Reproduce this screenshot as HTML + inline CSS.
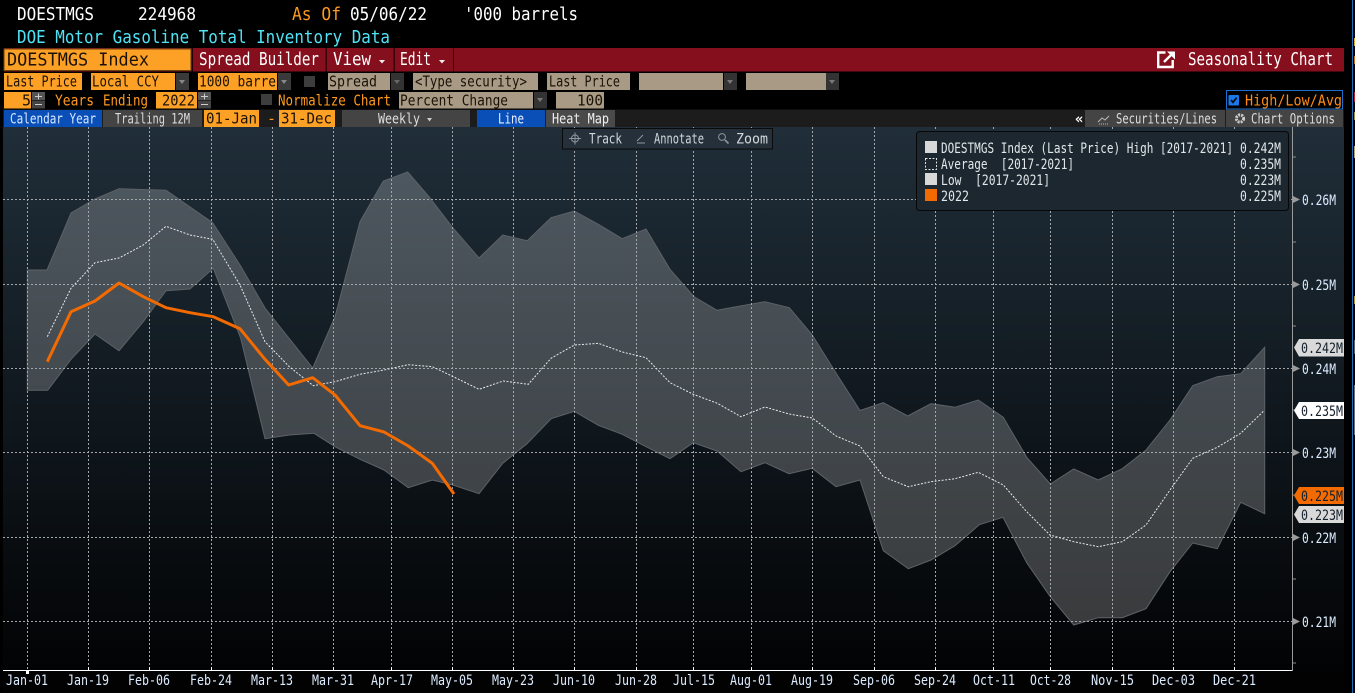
<!DOCTYPE html>
<html><head><meta charset="utf-8"><style>
html,body{margin:0;padding:0;background:#000;width:1355px;height:693px;overflow:hidden}
svg{display:block}
text{font-family:"DejaVu Sans Mono","Liberation Mono",monospace;white-space:pre}
.a{font-size:17.5px}.b{font-size:15px}.c{font-size:15px}.d{font-size:14px}
</style></head><body>
<svg width="1355" height="693" viewBox="0 0 1355 693" xmlns="http://www.w3.org/2000/svg">
<defs><linearGradient id="g" x1="0" y1="0" x2="0" y2="1"><stop offset="0" stop-color="#202e39"/><stop offset=".5" stop-color="#10181e"/><stop offset="1" stop-color="#010102"/></linearGradient></defs>
<rect width="1355" height="693" fill="#000"/>
<rect x="3" y="127" width="1341" height="566" fill="url(#g)"/>
<rect x="3" y="671" width="1341" height="22" fill="#020203"/>

<!-- band -->
<polygon fill="#fff" fill-opacity=".21" stroke="#5c6266" stroke-width="1" points="27.3,270 47,270 71,213 95,199 119,188.7 166,190.3 212.7,222.7 240,265 265,308 312.7,368 335,316.7 360,221.7 383.3,181 407.7,172 430,198 453,228 479,258 502.7,235 527.3,240.7 551,217.7 574.3,211 598.3,224.3 622.3,238.7 646,229 670,269.3 694,296.7 717,310.3 741.7,305.7 765,301.7 789.3,307.7 812.3,335 836,373 860,410.5 883.3,402.7 907.7,416 931,403.7 955,407.3 978.3,400 1003.3,417.3 1026.7,457.3 1050.3,484 1073.7,469 1098.3,480 1122.3,468.7 1146,450 1170,420 1192.7,385.7 1217.3,376.7 1240.7,373.7 1264.7,347.3 1264.7,513.7 1240.7,502.3 1217.3,548.7 1192.7,543 1170,571.7 1146,608.7 1122.3,617.7 1098.3,617.7 1073.7,625 1050.3,596.7 1026.7,562.7 1003,517.3 979.3,524.7 955,545.7 931,560 908.3,568.7 883.3,550.7 860,480 836,486.7 812.3,468.3 789,473.7 765,462.7 741,471.7 717,451 693.3,442.7 670,458.7 646,446.7 622.3,434.3 598.3,425.3 574.3,411.3 551.3,418.7 526.7,444 502.7,463.3 479,493.7 453,485 432.3,480 408.3,487.7 384,470 360,459.3 335,446.7 314,433.3 289.3,435 265,438.7 240.7,338.3 213.3,268.3 190,289 166,290.7 143.3,321.7 119,350.7 95,334 71,359.3 47.7,390.3 27.3,390.3"/>

<!-- grid -->
<g stroke="#a4a8aa" stroke-width="1" stroke-dasharray="2 2" fill="none" shape-rendering="crispEdges">
<path d="M3 199.5H1292M3 284.5H1292M3 368.5H1292M3 452.5H1292M3 537.5H1292M3 621.5H1292"/>
<path d="M27.5 127V670M88.5 127V670M149.5 127V670M211.5 127V670M272.5 127V670M333.5 127V670M391.5 127V670M452.5 127V670M513.5 127V670M574.5 127V670M636.5 127V670M693.5 127V670M751.5 127V670M812.5 127V670M874.5 127V670M935.5 127V670M993.5 127V670M1050.5 127V670M1112.5 127V670M1173.5 127V670M1234.5 127V670"/>
</g>

<!-- average -->
<polyline fill="none" stroke="#e8eaea" stroke-width="1" stroke-dasharray="2 1.5" points="47.3,336.7 71,288.3 95,262.7 119,258 143.3,245 166,226.3 190,235 212.7,239.3 240,285 265,341.7 289.3,366.7 313.3,385.7 335,381.7 360,374.3 384,370 408.3,364.7 432.3,366.7 453.3,376.7 479,389.3 503.3,381 528.3,384.3 551,358.3 574.3,345 598.3,343.3 622.3,352 646,357.7 670,382.7 693.3,394.3 717.3,403.3 741,416.7 765,407 789,414 812.3,418 836,436 860,446 883.3,476.7 908.3,486.7 931,481.7 955,478.7 978.3,472.3 1003.3,485 1026.7,511.7 1050,535 1073.7,541.7 1098.3,546.7 1122.3,541.7 1146,525 1170,490 1192.7,458.3 1217.3,447.3 1240.7,433.3 1264,410.7"/>
<!-- 2022 -->
<polyline fill="none" stroke="#f26a00" stroke-width="3" stroke-linejoin="round" points="47.3,361.7 71,311.7 95,301 119,283 143.3,296.7 166,307.7 190,312.7 213.3,316.7 240,328.7 265,359.3 288.7,385 312.7,377.7 335,395 360,425.7 384,432 408.3,446 432.3,463.3 454,494"/>

<!-- axes -->
<g shape-rendering="crispEdges">
<path d="M3 670.5H1293" stroke="#fff" fill="none"/>
<path d="M1292.5 127V671" stroke="#9a9a9a" fill="none"/>
<path d="M1293 157h3M1293 242h3M1293 326h3M1293 410h3M1293 495h3M1293 579h3M1293 663h3" stroke="#8a8a8a" fill="none"/>
<path d="M88.5 667v4M149.5 667v4M211.5 667v4M272.5 667v4M333.5 667v4M391.5 667v4M452.5 667v4M513.5 667v4M574.5 667v4M636.5 667v4M693.5 667v4M751.5 667v4M812.5 667v4M874.5 667v4M935.5 667v4M993.5 667v4M1050.5 667v4M1112.5 667v4M1173.5 667v4M1234.5 667v4" stroke="#fff" fill="none"/>
<rect x="26" y="670" width="3" height="4" fill="#fff"/>
</g>
<g fill="#9a9a9a">
<polygon points="1293,196 1300,199.5 1293,203"/><polygon points="1293,281 1300,284.5 1293,288"/><polygon points="1293,365 1300,368.5 1293,372"/><polygon points="1293,449 1300,452.5 1293,456"/><polygon points="1293,534 1300,537.5 1293,541"/><polygon points="1293,618 1300,621.5 1293,625"/>
</g>
<g fill="#dcecff">
<text class="d" x="1302" y="205" textLength="34" lengthAdjust="spacingAndGlyphs">0.26M</text>
<text class="d" x="1302" y="290" textLength="34" lengthAdjust="spacingAndGlyphs">0.25M</text>
<text class="d" x="1302" y="374" textLength="34" lengthAdjust="spacingAndGlyphs">0.24M</text>
<text class="d" x="1302" y="458" textLength="34" lengthAdjust="spacingAndGlyphs">0.23M</text>
<text class="d" x="1302" y="543" textLength="34" lengthAdjust="spacingAndGlyphs">0.22M</text>
<text class="d" x="1302" y="627" textLength="34" lengthAdjust="spacingAndGlyphs">0.21M</text>
</g>
<polygon points="1294,347.5 1299,339 1344,339 1344,356.5 1299,356.5" fill="#d9d9d9"/>
<text class="d" x="1301" y="353" fill="#14202c" textLength="42" lengthAdjust="spacingAndGlyphs">0.242M</text>
<polygon points="1294,410.5 1299,402 1344,402 1344,419 1299,419" fill="#fff"/>
<text class="d" x="1301" y="416" fill="#14202c" textLength="42" lengthAdjust="spacingAndGlyphs">0.235M</text>
<polygon points="1294,495.5 1299,487 1344,487 1344,504 1299,504" fill="#f26a00"/>
<text class="d" x="1301" y="501" fill="#14202c" textLength="42" lengthAdjust="spacingAndGlyphs">0.225M</text>
<polygon points="1294,514.5 1299,506 1344,506 1344,523 1299,523" fill="#d9d9d9"/>
<text class="d" x="1301" y="520" fill="#14202c" textLength="42" lengthAdjust="spacingAndGlyphs">0.223M</text>

<!-- x labels -->
<g fill="#dcecff" text-anchor="start">
<text class="d" x="6" y="685" textLength="42" lengthAdjust="spacingAndGlyphs">Jan-01</text>
<text class="d" x="67" y="685" textLength="42" lengthAdjust="spacingAndGlyphs">Jan-19</text>
<text class="d" x="128" y="685" textLength="42" lengthAdjust="spacingAndGlyphs">Feb-06</text>
<text class="d" x="190" y="685" textLength="42" lengthAdjust="spacingAndGlyphs">Feb-24</text>
<text class="d" x="251" y="685" textLength="42" lengthAdjust="spacingAndGlyphs">Mar-13</text>
<text class="d" x="312" y="685" textLength="42" lengthAdjust="spacingAndGlyphs">Mar-31</text>
<text class="d" x="371" y="685" textLength="42" lengthAdjust="spacingAndGlyphs">Apr-17</text>
<text class="d" x="431" y="685" textLength="42" lengthAdjust="spacingAndGlyphs">May-05</text>
<text class="d" x="492" y="685" textLength="42" lengthAdjust="spacingAndGlyphs">May-23</text>
<text class="d" x="553" y="685" textLength="42" lengthAdjust="spacingAndGlyphs">Jun-10</text>
<text class="d" x="615" y="685" textLength="42" lengthAdjust="spacingAndGlyphs">Jun-28</text>
<text class="d" x="673" y="685" textLength="42" lengthAdjust="spacingAndGlyphs">Jul-15</text>
<text class="d" x="730" y="685" textLength="42" lengthAdjust="spacingAndGlyphs">Aug-01</text>
<text class="d" x="791" y="685" textLength="42" lengthAdjust="spacingAndGlyphs">Aug-19</text>
<text class="d" x="853" y="685" textLength="42" lengthAdjust="spacingAndGlyphs">Sep-06</text>
<text class="d" x="914" y="685" textLength="42" lengthAdjust="spacingAndGlyphs">Sep-24</text>
<text class="d" x="973" y="685" textLength="42" lengthAdjust="spacingAndGlyphs">Oct-11</text>
<text class="d" x="1030" y="685" textLength="41" lengthAdjust="spacingAndGlyphs">Oct-28</text>
<text class="d" x="1091" y="685" textLength="43" lengthAdjust="spacingAndGlyphs">Nov-15</text>
<text class="d" x="1152" y="685" textLength="43" lengthAdjust="spacingAndGlyphs">Dec-03</text>
<text class="d" x="1213" y="685" textLength="43" lengthAdjust="spacingAndGlyphs">Dec-21</text>
</g>

<!-- header text -->
<text class="a" x="17" y="20" fill="#fff" textLength="77" lengthAdjust="spacingAndGlyphs">DOESTMGS</text>
<text class="a" x="138" y="20" fill="#fff" textLength="58" lengthAdjust="spacingAndGlyphs">224968</text>
<text class="a" x="292" y="20" fill="#ff9a1f" textLength="49" lengthAdjust="spacingAndGlyphs">As Of</text>
<text class="a" x="350" y="20" fill="#fff" textLength="77" lengthAdjust="spacingAndGlyphs">05/06/22</text>
<text class="a" x="464" y="20" fill="#fff" textLength="114" lengthAdjust="spacingAndGlyphs">'000 barrels</text>
<text class="a" x="17" y="43" fill="#4fe3f5" textLength="373" lengthAdjust="spacingAndGlyphs">DOE Motor Gasoline Total Inventory Data</text>

<!-- red bar -->
<rect x="4" y="48" width="1340" height="23.5" fill="#860f1e"/>
<rect x="191.5" y="48" width="1.5" height="23.5" fill="#200"/>
<rect x="325.5" y="48" width="1.5" height="23.5" fill="#3a0509"/>
<rect x="393.5" y="48" width="1.5" height="23.5" fill="#3a0509"/>
<rect x="453" y="48" width="1" height="23.5" fill="#3a0509"/>
<rect x="4" y="49" width="187" height="21.5" fill="#fda026" stroke="#6b4410" stroke-width="1"/>
<text class="a" x="7" y="65.5" fill="#1b1206" textLength="142" lengthAdjust="spacingAndGlyphs">DOESTMGS Index</text>
<text class="a" x="199" y="65" fill="#fff" textLength="120" lengthAdjust="spacingAndGlyphs">Spread Builder</text>
<text class="a" x="333" y="65" fill="#fff" textLength="38" lengthAdjust="spacingAndGlyphs">View</text>
<polygon points="379,60 385,60 382,63.5" fill="#eee"/>
<text class="a" x="400" y="65" fill="#fff" textLength="31" lengthAdjust="spacingAndGlyphs">Edit</text>
<polygon points="439,60 445,60 442,63.5" fill="#eee"/>
<!-- popout icon -->
<g fill="none" stroke="#fff" stroke-width="2.4"><path d="M1165.5 52.5h-7.3v14.5h14.5v-7"/><path d="M1164 62l8-8"/></g>
<polygon points="1167,51.5 1175,51.5 1175,59.5" fill="#fff"/>
<text class="a" x="1188" y="65" fill="#fff" textLength="145" lengthAdjust="spacingAndGlyphs">Seasonality Chart</text>

<!-- row 2 -->
<g shape-rendering="crispEdges">
<rect x="4" y="73" width="78" height="17" fill="#fda026"/>
<rect x="91" y="73" width="84" height="17" fill="#fda026"/>
<rect x="176" y="73" width="13" height="17" fill="#3a3a3a"/>
<rect x="198" y="73" width="79" height="17" fill="#fda026"/>
<rect x="278" y="73" width="13" height="17" fill="#3a3a3a"/>
<rect x="304" y="76" width="11" height="11" fill="#3d3d3d"/>
<rect x="328" y="73" width="62" height="17" fill="#a89a85"/>
<rect x="391" y="73" width="13" height="17" fill="#333"/>
<rect x="413" y="73" width="125" height="17" fill="#a89a85"/>
<rect x="547" y="73" width="83" height="17" fill="#a89a85"/>
<rect x="639" y="73" width="84" height="17" fill="#a89a85"/>
<rect x="724" y="73" width="13" height="17" fill="#333"/>
<rect x="746" y="73" width="80" height="17" fill="#a89a85"/>
<rect x="826" y="73" width="13" height="17" fill="#333"/>
<!-- row 3 -->
<rect x="4" y="92" width="27" height="16.5" fill="#fda026"/>
<rect x="32" y="92" width="13" height="8" fill="#555"/><rect x="32" y="100.5" width="13" height="8" fill="#444"/>
<rect x="156" y="92" width="41" height="16.5" fill="#fda026"/>
<rect x="198" y="92" width="13" height="8" fill="#555"/><rect x="198" y="100.5" width="13" height="8" fill="#444"/>
<rect x="261" y="94" width="11" height="11" fill="#3d3d3d"/>
<rect x="399" y="92" width="134" height="16.5" fill="#a89a85"/>
<rect x="534" y="92" width="13" height="16.5" fill="#333"/>
<rect x="556" y="92" width="48" height="16.5" fill="#a89a85"/>
<!-- row 4 -->
<rect x="3" y="109.5" width="1341" height="17.5" fill="#1c1c1c"/>
<rect x="4" y="110" width="98" height="17" fill="#0a4fb8"/>
<rect x="103" y="110" width="99" height="17" fill="#444"/>
<rect x="204" y="110" width="55" height="17" fill="#fda026"/>
<rect x="279" y="110" width="56" height="17" fill="#fda026"/>
<rect x="342" y="110" width="128" height="17" fill="#444"/>
<rect x="477" y="110" width="68" height="17" fill="#0a4fb8"/>
<rect x="546" y="110" width="69" height="17" fill="#4a4a4a"/>
<rect x="1085" y="110" width="140" height="17" fill="#444"/>
<rect x="1226" y="110" width="117" height="17" fill="#444"/>
</g>
<g fill="#888">
<polygon points="179,80 185,80 182,84"/><polygon points="281,80 287,80 284,84"/><polygon points="394,80 400,80 397,84" fill="#666"/><polygon points="727,80 733,80 730,84" fill="#777"/><polygon points="829,80 835,80 832,84" fill="#777"/><polygon points="537,98 543,98 540,102" fill="#777"/>
</g>
<g fill="none" stroke="#ccc"><path d="M35 96.5h7M38.5 93.5v6M35 104.5h7M201 96.5h7M204.5 93.5v6M201 104.5h7"/></g>

<text class="c" x="6" y="86.5" fill="#1b1206" textLength="71" lengthAdjust="spacingAndGlyphs">Last Price</text>
<text class="c" x="92" y="86.5" fill="#1b1206" textLength="67" lengthAdjust="spacingAndGlyphs">Local CCY</text>
<text class="c" x="199" y="86.5" fill="#1b1206" textLength="77" lengthAdjust="spacingAndGlyphs">1000 barre</text>
<text class="c" x="329" y="86.5" fill="#1b1206" textLength="48" lengthAdjust="spacingAndGlyphs">Spread</text>
<text class="c" x="415" y="86.5" fill="#1b1206" textLength="112" lengthAdjust="spacingAndGlyphs">&lt;Type security&gt;</text>
<text class="c" x="549" y="86.5" fill="#1b1206" textLength="71" lengthAdjust="spacingAndGlyphs">Last Price</text>
<text class="c" x="22" y="105.5" fill="#1b1206">5</text>
<text class="c" x="55" y="105.5" fill="#ff9a1f" textLength="39" lengthAdjust="spacingAndGlyphs">Years</text>
<text class="c" x="103" y="105.5" fill="#ff9a1f" textLength="45" lengthAdjust="spacingAndGlyphs">Ending</text>
<text class="c" x="162" y="105.5" fill="#1b1206" textLength="33" lengthAdjust="spacingAndGlyphs">2022</text>
<text class="c" x="278" y="105.5" fill="#ff9a1f" textLength="113" lengthAdjust="spacingAndGlyphs">Normalize Chart</text>
<text class="c" x="400" y="105.5" fill="#1b1206" textLength="108" lengthAdjust="spacingAndGlyphs">Percent Change</text>
<text class="c" x="577" y="105.5" fill="#1b1206" textLength="26" lengthAdjust="spacingAndGlyphs">100</text>

<text class="d" x="10" y="123.5" fill="#d8e8ff" textLength="86" lengthAdjust="spacingAndGlyphs">Calendar Year</text>
<text class="d" x="115" y="123.5" fill="#ddd" textLength="75" lengthAdjust="spacingAndGlyphs">Trailing 12M</text>
<text class="c" x="206" y="123.5" fill="#1b1206" textLength="51" lengthAdjust="spacingAndGlyphs">01-Jan</text>
<text class="c" x="267" y="123.5" fill="#ff9a1f">-</text>
<text class="c" x="281" y="123.5" fill="#1b1206" textLength="51" lengthAdjust="spacingAndGlyphs">31-Dec</text>
<text class="d" x="378" y="123.5" fill="#ddd" textLength="42" lengthAdjust="spacingAndGlyphs">Weekly</text>
<polygon points="427,118 432,118 429.5,121.5" fill="#ccc"/>
<text class="d" x="498" y="123.5" fill="#e8f0ff" textLength="26" lengthAdjust="spacingAndGlyphs">Line</text>
<text class="d" x="552" y="123.5" fill="#eee" textLength="57" lengthAdjust="spacingAndGlyphs">Heat Map</text>
<text class="d" x="1075" y="123.5" fill="#fff" font-weight="bold" textLength="9">«</text>
<g fill="none" stroke="#bbb"><path d="M1098 122l4-4 3 2 4-4"/><path d="M1099 124h10" stroke-dasharray="1 1"/></g>
<text class="d" x="1116" y="123.5" fill="#ddd" textLength="101" lengthAdjust="spacingAndGlyphs">Securities/Lines</text>
<circle cx="1240" cy="118.5" r="3.6" fill="none" stroke="#ccc" stroke-width="3" stroke-dasharray="2 1"/>
<text class="d" x="1251" y="123.5" fill="#ddd" textLength="84" lengthAdjust="spacingAndGlyphs">Chart Options</text>

<!-- high low avg -->
<rect x="1226.5" y="90.5" width="116" height="18.5" fill="#000" stroke="#1c6fd0"/>
<rect x="1228.5" y="95" width="10.5" height="10.5" rx="1" fill="#1c78e8"/>
<path d="M1231 100l2 2.3 3.7-4.6" fill="none" stroke="#081018" stroke-width="1.8"/>
<text class="c" x="1245" y="105.5" fill="#ff8a14" textLength="97" lengthAdjust="spacingAndGlyphs">High/Low/Avg</text>

<!-- toolbar -->
<rect x="562.5" y="128.5" width="210" height="20.5" fill="#25303a" stroke="#0a0a0a"/>
<g fill="none" stroke="#8d969c"><circle cx="575" cy="138.5" r="3.5"/><path d="M575 132.5v12M569 138.5h12"/><path d="M637 143h8M637 141l6-6" /><circle cx="722" cy="137" r="3.4"/><path d="M725 140l3.5 3.5" stroke-width="1.6"/></g>
<text class="d" x="589" y="143.5" fill="#d0d8dc" textLength="33" lengthAdjust="spacingAndGlyphs">Track</text>
<text class="d" x="654" y="143.5" fill="#d0d8dc" textLength="50" lengthAdjust="spacingAndGlyphs">Annotate</text>
<text class="d" x="736" y="143.5" fill="#d0d8dc" textLength="32" lengthAdjust="spacingAndGlyphs">Zoom</text>

<!-- legend -->
<rect x="916.5" y="131.5" width="372" height="79" rx="3" fill="#1c2730" stroke="#070707"/>
<rect x="925" y="141" width="12" height="12" fill="#d8d8d8"/>
<rect x="925.5" y="158.5" width="11" height="11" fill="none" stroke="#e0e0e0" stroke-dasharray="2 1.5"/>
<rect x="925" y="173" width="12" height="12" fill="#d8d8d8"/>
<rect x="925" y="189" width="12" height="12" fill="#f26a00"/>
<g fill="#e2e8ea">
<text class="d" x="941" y="153" textLength="292" lengthAdjust="spacingAndGlyphs">DOESTMGS Index (Last Price) High [2017-2021]</text>
<text class="d" x="941" y="169" textLength="133" lengthAdjust="spacingAndGlyphs">Average  [2017-2021]</text>
<text class="d" x="941" y="185" textLength="109" lengthAdjust="spacingAndGlyphs">Low  [2017-2021]</text>
<text class="d" x="941" y="201" textLength="28" lengthAdjust="spacingAndGlyphs">2022</text>
<text class="d" x="1240" y="153" textLength="41" lengthAdjust="spacingAndGlyphs">0.242M</text>
<text class="d" x="1240" y="169" textLength="41" lengthAdjust="spacingAndGlyphs">0.235M</text>
<text class="d" x="1240" y="185" textLength="41" lengthAdjust="spacingAndGlyphs">0.223M</text>
<text class="d" x="1240" y="201" textLength="41" lengthAdjust="spacingAndGlyphs">0.225M</text>
</g>

<!-- window edge -->
<rect x="0" y="0" width="3" height="693" fill="#000"/>
<rect x="1352" y="0" width="1" height="693" fill="#1f6fb8"/>
<g shape-rendering="crispEdges">
<rect x="1354" y="38" width="1" height="8" fill="#e8a030"/><rect x="1354" y="56" width="1" height="8" fill="#c86a20"/><rect x="1354" y="92" width="1" height="10" fill="#c02020"/><rect x="1354" y="112" width="1" height="8" fill="#a08a40"/><rect x="1354" y="146" width="1" height="12" fill="#b8a070"/><rect x="1354" y="296" width="1" height="8" fill="#b89040"/><rect x="1354" y="340" width="1" height="14" fill="#606060"/><rect x="1354" y="385" width="1" height="50" fill="#707070"/>
</g>
</svg>
</body></html>
